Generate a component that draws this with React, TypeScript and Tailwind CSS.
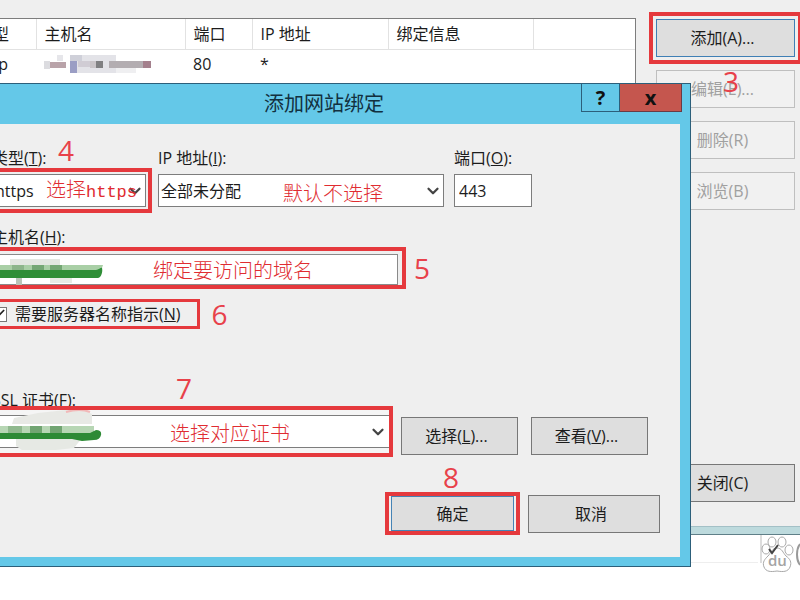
import type { ReactNode } from "react";
import { Check, ChevronDown } from "lucide-react";
import clsx from "clsx";

const Callout = ({ n, className }: { n: number; className?: string }) => (
  <span
    className={clsx(
      "text-[28px] leading-7 text-[#e8414a] pointer-events-none",
      className
    )}
  >
    {n}
  </span>
);

const Hint = ({
  children,
  className,
}: {
  children: ReactNode;
  className?: string;
}) => (
  <span
    className={clsx(
      "absolute whitespace-nowrap text-xl leading-6 font-light text-[#e02c31] pointer-events-none font-['Liberation_Mono','Noto_Sans_CJK_SC',monospace]",
      className
    )}
  >
    {children}
  </span>
);

const DialogButton = ({
  children,
  className,
}: {
  children: ReactNode;
  className?: string;
}) => (
  <button
    type="button"
    className={clsx("border border-[#777] bg-[#dedede]", className)}
  >
    {children}
  </button>
);

const SideButton = ({
  children,
  disabled,
  className,
}: {
  children: ReactNode;
  disabled?: boolean;
  className?: string;
}) => (
  <button
    type="button"
    disabled={disabled}
    className={clsx(
      "relative h-[38px] w-full border pr-1.5",
      disabled
        ? "border-[#bfbfbf] bg-[#f1f1f1] text-[#a0a0a0]"
        : "bg-[#dedede] text-[#1c1c1c]",
      className
    )}
  >
    {children}
  </button>
);

const Dropdown = ({
  id,
  value,
  className,
}: {
  id: string;
  value: string;
  className?: string;
}) => (
  <>
    <select
      id={id}
      className={clsx(
        "block h-[33px] w-full appearance-none border-[#7d7d7d] bg-white pl-0.5",
        className
      )}
    >
      <option>{value}</option>
    </select>
    <ChevronDown
      size={18}
      strokeWidth={3}
      className="absolute right-[2px] top-2 text-[#444] pointer-events-none"
    />
  </>
);

const HostSmear = () => (
  <svg width="110" height="18" viewBox="0 0 110 18">
    <rect x="4" y="7" width="18" height="6" fill="#b9a3a9" />
    <rect x="0" y="6" width="6" height="8" fill="#dcdce0" />
    <rect x="13" y="0" width="6" height="6" fill="#e6e6ea" />
    <rect x="26" y="0" width="46" height="18" fill="#e3e3e8" />
    <rect x="26" y="6" width="7" height="12" fill="#9a9dc4" />
    <rect x="26" y="0" width="12" height="6" fill="#cfd0d9" />
    <rect x="34" y="6" width="12" height="6" fill="#d0ccd4" />
    <rect x="52" y="6" width="7" height="7" fill="#808082" />
    <rect x="46" y="6" width="6" height="7" fill="#c9c4c8" />
    <rect x="65" y="6" width="36" height="7" fill="#b3adb1" />
    <rect x="99" y="6" width="8" height="7" fill="#a4808d" />
    <rect x="72" y="13" width="20" height="5" fill="#efeff1" />
  </svg>
);

const NameSmear = ({ className }: { className?: string }) => (
  <svg
    width="114"
    height="36"
    viewBox="0 0 114 36"
    className={clsx("absolute pointer-events-none", className)}
  >
    <rect x="18" y="4" width="50" height="8" fill="#e3e7e1" />
    <rect x="24" y="22" width="6" height="8" fill="#b9c4b8" />
    <rect x="58" y="22" width="22" height="6" fill="#e7ebe5" />
    <path d="M0 10h111l-2 6H0z" fill="#a9cfa6" />
    <rect x="20" y="10" width="12" height="6" fill="#8cb58a" />
    <rect x="40" y="10" width="12" height="6" fill="#74a774" />
    <rect x="58" y="10" width="12" height="6" fill="#74a774" />
    <path d="M0 15h104c3 0 5-3 6-2 1 4-1 10-4 10H0z" fill="#2f8e37" />
  </svg>
);

const CertSmear = ({ className }: { className?: string }) => (
  <svg
    width="114"
    height="42"
    viewBox="0 0 114 42"
    className={clsx("absolute pointer-events-none", className)}
  >
    <path d="M22 8l24-5 28-3h18l8 4v10H20z" fill="#e8e9e5" />
    <path d="M74 2q14-4 24 0" stroke="#f2b8b8" strokeWidth="2" fill="none" />
    <path d="M24 28h66l-8 10-18 2H30l-6-4z" fill="#e6e9e4" />
    <rect x="0" y="16" width="102" height="9" fill="#b7d6b4" />
    <rect x="16" y="16" width="14" height="8" fill="#90b98e" />
    <rect x="38" y="16" width="12" height="8" fill="#72a572" />
    <rect x="58" y="16" width="12" height="8" fill="#72a572" />
    <path d="M0 23h98l6-3q6 0 5 5-1 5-7 5l-12 1-10-2H0z" fill="#2d8a35" />
  </svg>
);

const Watermark = () => (
  <svg width="42" height="38" viewBox="0 0 42 38" fill="none" stroke="#a9a9a9">
    <path d="M3 0v28" stroke="#bbb" />
    <ellipse cx="8" cy="14" rx="4" ry="5" fill="#fff" />
    <ellipse cx="14" cy="7" rx="4" ry="5" fill="#fff" />
    <ellipse cx="24" cy="7" rx="4" ry="5" fill="#fff" />
    <ellipse cx="31" cy="15" rx="4" ry="5" fill="#fff" />
    <path
      d="M19 13c5 0 6 5 9 8 4 3 6 6 4 11-2 5-7 5-13 4-6 1-11 1-13-4-2-5 1-8 4-11 3-3 4-8 9-8z"
      fill="#fff"
    />
    <path d="M11 14l3 4 6-8" stroke="#444" strokeWidth="2" />
    <path d="M42 9c-4 5-4 16 0 21" stroke="#999" strokeWidth="2" />
    <text
      x="10"
      y="31"
      fontSize="15"
      fontWeight="600"
      fontFamily="Open Sans, sans-serif"
      fill="#a4a4a4"
      stroke="none"
    >
      du
    </text>
  </svg>
);

const AddBindingDialog = () => (
  <section
    role="dialog"
    aria-labelledby="dialog-title"
    className="absolute -left-6 right-[109px] top-[83px] border border-[#2c5f7a] bg-[#64c8e8]"
  >
    <header className="flex h-10 items-start pr-2">
      <h1
        id="dialog-title"
        className="flex-1 pl-[90px] text-center text-xl leading-10 text-[#12303f]"
      >
        添加网站绑定
      </h1>
      <button
        type="button"
        aria-label="help"
        className="h-7 w-[39px] border border-t-0 border-[#2c5f7a] text-xl leading-6 font-bold text-[#111]"
      >
        ?
      </button>
      <button
        type="button"
        aria-label="close"
        className="h-7 w-[62px] border border-t-0 border-l-0 border-[#6b3a44] bg-[#c5564e] text-xl leading-6 font-bold text-[#111]"
      >
        x
      </button>
    </header>

    <form className="mr-2.5 mb-[9px] ml-2.5 bg-[#efefef] pt-6 pl-[5px] pb-[22px]">
      <div className="flex pr-[148px]">
        <div className="relative w-[154px]">
          <label htmlFor="type" className="block leading-5">
            类型(<u>T</u>):
          </label>
          <Callout n={4} className="absolute left-[66px] -top-3" />
          <div className="relative mt-1.5">
            <Dropdown
              id="type"
              value="https"
              className="border outline-4 outline-offset-2 outline-[#e5393d]"
            />
            <Hint className="left-[54px] top-1.5">
              选择<span className="text-[17px]">https</span>
            </Hint>
          </div>
        </div>
        <div className="ml-3 flex-1">
          <label htmlFor="ip" className="block leading-5">
            IP 地址(<u>I</u>):
          </label>
          <div className="relative mt-1.5">
            <Dropdown id="ip" value="全部未分配" className="border" />
            <Hint className="left-[125px] top-2.5">默认不选择</Hint>
          </div>
        </div>
        <div className="ml-2.5 w-[78px]">
          <label htmlFor="port" className="block leading-5">
            端口(<u>O</u>):
          </label>
          <input
            id="port"
            defaultValue="443"
            className="mt-1.5 block h-[33px] w-full border border-[#7d7d7d] bg-white px-1"
          />
        </div>
      </div>

      <label htmlFor="host" className="mt-5 block leading-5">
        主机名(<u>H</u>):
      </label>
      <div className="flex items-center gap-2 pr-[250px]">
        <div className="relative flex-1 border-4 border-l-0 border-[#e5393d] pt-[3px] pr-1">
          <input
            id="host"
            className="block h-[31px] w-full border border-[#8a8a8a] bg-white px-1"
          />
          <NameSmear className="left-0 top-1" />
          <Hint className="left-[161px] top-2.5">绑定要访问的域名</Hint>
        </div>
        <Callout n={5} />
      </div>

      <div className="mt-2.5 flex h-[30px] items-center gap-3">
        <label className="relative flex h-[30px] items-center gap-2 border-[3px] border-l-0 border-[#e5393d] pr-4">
          <input
            type="checkbox"
            defaultChecked
            className="size-[15px] appearance-none border border-[#777] bg-white"
          />
          <Check
            size={14}
            strokeWidth={3}
            className="absolute left-0 text-[#222]"
          />
          <span>
            需要服务器名称指示(<u>N</u>)
          </span>
        </label>
        <Callout n={6} />
      </div>

      <div className="relative mt-[61px]">
        <label htmlFor="cert" className="block leading-5">
          SSL 证书(<u>F</u>):
        </label>
        <Callout n={7} className="absolute left-[184px] -top-4" />
      </div>
      <div className="-mt-1 flex items-end pr-8">
        <div className="relative flex-1 border-4 border-l-0 border-[#e5393d] bg-[#f5f5f5] py-[5px]">
          <div className="relative">
            <Dropdown id="cert" value="" className="border-y" />
          </div>
          <CertSmear className="left-0 top-0" />
          <Hint className="left-[178px] top-3.5">选择对应证书</Hint>
        </div>
        <DialogButton className="mb-0.5 ml-2 h-[38px] w-[117px] pr-1.5">
          选择(<u>L</u>)...
        </DialogButton>
        <DialogButton className="mb-0.5 ml-[13px] h-[38px] w-[117px] pr-1.5">
          查看(<u>V</u>)...
        </DialogButton>
      </div>

      <div className="mt-[35px] flex items-center justify-end gap-2 pr-5">
        <div className="relative border-4 border-[#e5393d] px-0.5">
          <Callout n={8} className="absolute left-[54px] -top-[33px]" />
          <DialogButton className="block h-[35px] w-[123px] border-[#4583b5]">
            确定
          </DialogButton>
        </div>
        <DialogButton className="h-[38px] w-[132px] pr-1.5">取消</DialogButton>
      </div>
    </form>
  </section>
);

export default function App() {
  return (
    <div className="relative min-h-screen overflow-hidden bg-white font-['Open_Sans','Noto_Sans_CJK_SC',sans-serif] text-base text-[#1c1c1c]">
      <main className="flex gap-5 border-b border-[#a3c0c6] bg-[#efefef] pt-[18px] pr-[5px]">
        <div className="-ml-8 flex-1 border border-[#7d7d7d] bg-white">
          <table className="w-full table-fixed text-left">
            <thead>
              <tr className="h-[30px] [&>th]:border-b [&>th]:border-r [&>th]:border-[#e2e2e2] [&>th]:px-2 [&>th]:font-normal">
                <th className="w-[67px]">类型</th>
                <th className="w-[149px]">主机名</th>
                <th className="w-[67px]">端口</th>
                <th className="w-[136px]">IP 地址</th>
                <th className="w-[145px]">绑定信息</th>
                <td className="border-b border-[#e2e2e2]"></td>
              </tr>
            </thead>
            <tbody>
              <tr className="h-[30px] [&>td]:px-2">
                <td>http</td>
                <td>
                  <HostSmear />
                </td>
                <td>80</td>
                <td>*</td>
                <td></td>
                <td></td>
              </tr>
            </tbody>
          </table>
        </div>

        <div className="flex w-[139px] flex-col gap-[13px] pt-px pb-6">
          <SideButton className="border-[#3f7fb5] outline-4 outline-offset-3 outline-[#e5393d]">
            添加(A)...
          </SideButton>
          <SideButton disabled>
            编辑(E)...
            <Callout n={3} className="absolute left-[66px] -top-1" />
          </SideButton>
          <SideButton disabled>删除(R)</SideButton>
          <SideButton disabled>浏览(B)</SideButton>
          <SideButton className="mt-[241px] border-[#777]">关闭(C)</SideButton>
        </div>
      </main>
      <div className="h-2 border-b border-[#5f7f88] bg-[#bddadd]"></div>

      <footer className="flex items-start justify-end">
        <div className="h-7 flex-1 border-b border-[#eee]"></div>
        <Watermark />
      </footer>

      <AddBindingDialog />
    </div>
  );
}
